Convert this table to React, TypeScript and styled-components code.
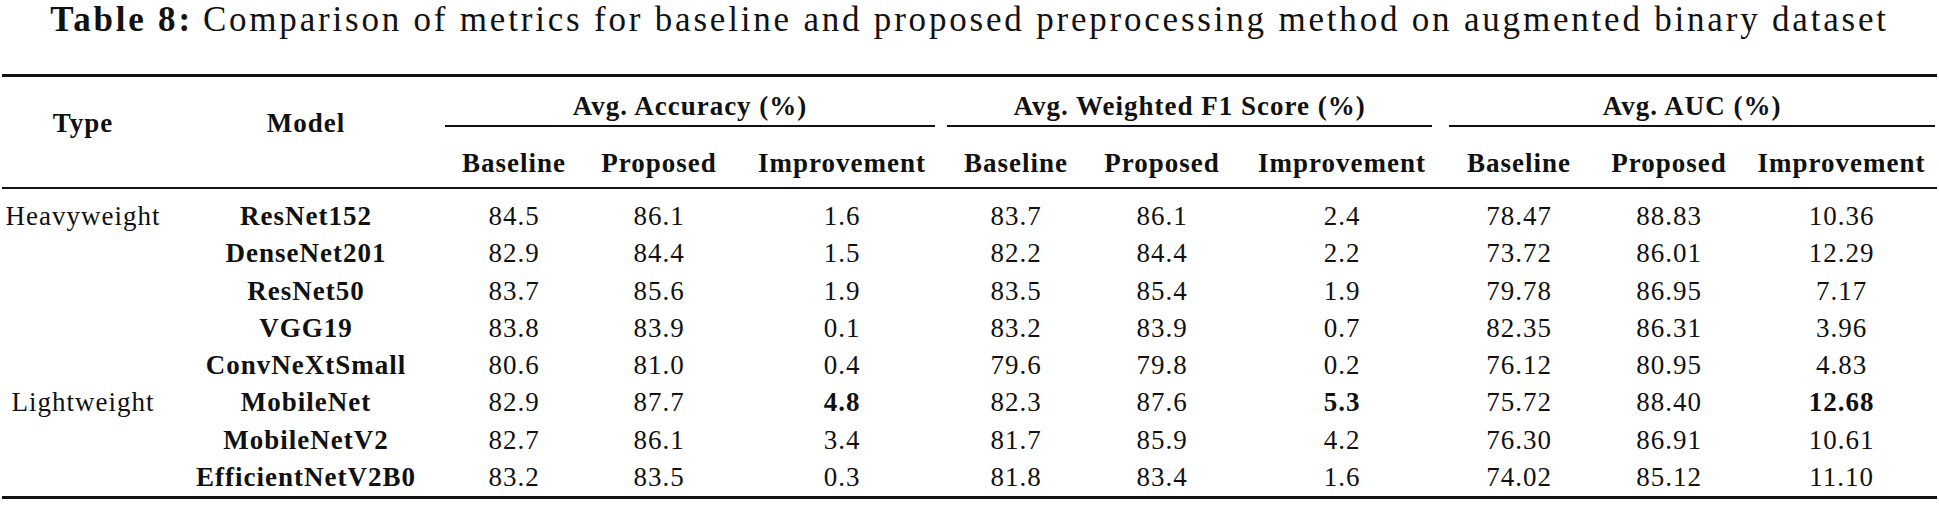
import { createGlobalStyle, styled } from "styled-components";

const GlobalStyle = createGlobalStyle`
  html, body {
    margin: 0;
    padding: 0;
    background: #fff;
  }
  body {
    font-family: "Liberation Serif", "Times New Roman", serif;
    color: #111;
  }
`;

type Row = {
  type?: string;
  model: string;
  values: string[];
  bold?: number[];
};

const widths = [162, 284, 132, 158, 208, 140, 152, 208, 146, 154, 191];

const groups = [
  { label: "Avg. Accuracy (%)", trimLeft: -3, trimRight: 11 },
  { label: "Avg. Weighted F1 Score (%)", trimLeft: 1, trimRight: 14 },
  { label: "Avg. AUC (%)", trimLeft: 3, trimRight: 2 },
];

const rows: Row[] = [
  { type: "Heavyweight", model: "ResNet152", values: ["84.5", "86.1", "1.6", "83.7", "86.1", "2.4", "78.47", "88.83", "10.36"] },
  { model: "DenseNet201", values: ["82.9", "84.4", "1.5", "82.2", "84.4", "2.2", "73.72", "86.01", "12.29"] },
  { model: "ResNet50", values: ["83.7", "85.6", "1.9", "83.5", "85.4", "1.9", "79.78", "86.95", "7.17"] },
  { model: "VGG19", values: ["83.8", "83.9", "0.1", "83.2", "83.9", "0.7", "82.35", "86.31", "3.96"] },
  { model: "ConvNeXtSmall", values: ["80.6", "81.0", "0.4", "79.6", "79.8", "0.2", "76.12", "80.95", "4.83"] },
  { type: "Lightweight", model: "MobileNet", values: ["82.9", "87.7", "4.8", "82.3", "87.6", "5.3", "75.72", "88.40", "12.68"], bold: [2, 5, 8] },
  { model: "MobileNetV2", values: ["82.7", "86.1", "3.4", "81.7", "85.9", "4.2", "76.30", "86.91", "10.61"] },
  { model: "EfficientNetV2B0", values: ["83.2", "83.5", "0.3", "81.8", "83.4", "1.6", "74.02", "85.12", "11.10"] },
];

const Page = styled.div`
  width: 1939px;
  height: 505px;
  overflow: hidden;
`;

const Caption = styled.div`
  height: 40px;
  margin-bottom: 34px;
  font-size: 35px;
  line-height: 40px;
  letter-spacing: 2.8px;
  text-align: center;
  white-space: nowrap;
`;

const CaptionLabel = styled.b`
  font-weight: 700;
  margin-right: 10px;
`;

const Table = styled.table`
  margin-left: 2px;
  width: 1935px;
  table-layout: fixed;
  border-collapse: separate;
  border-spacing: 0;
  border-top: 3px solid #111;
  border-bottom: 3px solid #111;
  font-size: 27px;
  letter-spacing: 1px;
`;

const Col = styled.col<{ $w: number }>`
  width: ${(p) => p.$w}px;
`;

const HeadCell = styled.th`
  padding: 0 0 18px;
  font-weight: 700;
  line-height: 30px;
  text-align: center;
  vertical-align: middle;
  white-space: nowrap;
  border-bottom: 2px solid #111;
`;

const GroupCell = styled.th`
  padding: 14px 0 0;
  font-weight: 700;
  line-height: 30px;
  text-align: center;
  white-space: nowrap;
`;

const GroupRule = styled.div<{ $left: number; $right: number }>`
  margin: 0 ${(p) => p.$right}px 0 ${(p) => p.$left}px;
  padding-bottom: 4px;
  border-bottom: 2px solid #111;
`;

const SubCell = styled.th`
  padding: 21px 0 9px;
  font-weight: 700;
  line-height: 30px;
  text-align: center;
  white-space: nowrap;
  border-bottom: 2px solid #111;
`;

const Cell = styled.td<{ $bold?: boolean; $first?: boolean }>`
  padding: ${(p) => (p.$first ? "9px 0 0" : "0")};
  line-height: 37.3px;
  text-align: center;
  white-space: nowrap;
  font-weight: ${(p) => (p.$bold ? 700 : 400)};
`;

export default function App() {
  return (
    <Page>
      <GlobalStyle />
      <Caption>
        <CaptionLabel>Table 8:</CaptionLabel>
        Comparison of metrics for baseline and proposed preprocessing method on augmented binary dataset
      </Caption>
      <Table>
        <colgroup>
          {widths.map((w, i) => (
            <Col key={i} $w={w} />
          ))}
        </colgroup>
        <thead>
          <tr>
            <HeadCell rowSpan={2}>Type</HeadCell>
            <HeadCell rowSpan={2}>Model</HeadCell>
            {groups.map((g) => (
              <GroupCell key={g.label} colSpan={3}>
                <GroupRule $left={g.trimLeft} $right={g.trimRight}>
                  {g.label}
                </GroupRule>
              </GroupCell>
            ))}
          </tr>
          <tr>
            {groups.map((g) =>
              ["Baseline", "Proposed", "Improvement"].map((s) => (
                <SubCell key={g.label + s}>{s}</SubCell>
              ))
            )}
          </tr>
        </thead>
        <tbody>
          {rows.map((r, ri) => (
            <tr key={r.model}>
              <Cell $first={ri === 0}>{r.type ?? ""}</Cell>
              <Cell $first={ri === 0} $bold>
                {r.model}
              </Cell>
              {r.values.map((v, vi) => (
                <Cell key={vi} $first={ri === 0} $bold={r.bold?.includes(vi)}>
                  {v}
                </Cell>
              ))}
            </tr>
          ))}
        </tbody>
      </Table>
    </Page>
  );
}
